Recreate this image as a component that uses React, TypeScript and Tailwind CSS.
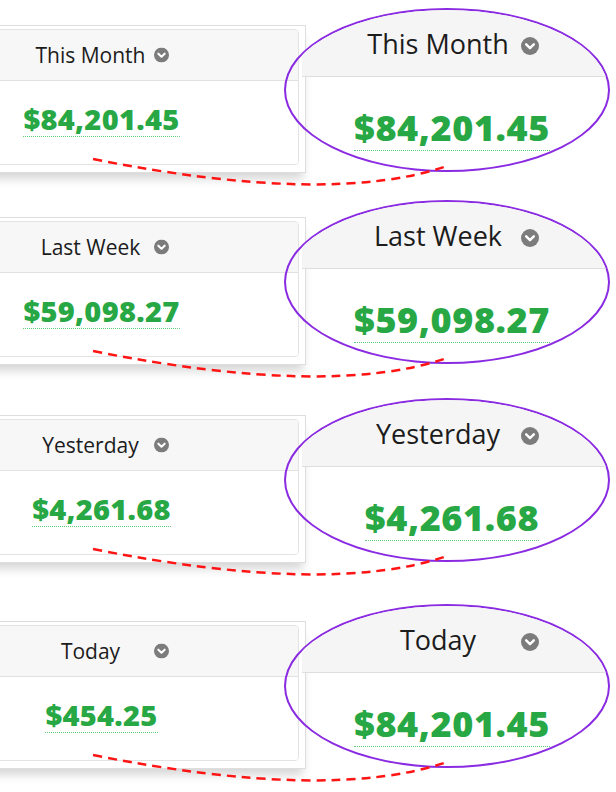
import React from "react";

type Row = { label: string; amount: string; zoomLabel: string; zoomAmount: string; h: string };

const rows: Row[] = [
  { label: "This Month", amount: "$84,201.45", zoomLabel: "This Month", zoomAmount: "$84,201.45", h: "h-[192px]" },
  { label: "Last Week", amount: "$59,098.27", zoomLabel: "Last Week", zoomAmount: "$59,098.27", h: "h-[198px]" },
  { label: "Yesterday", amount: "$4,261.68", zoomLabel: "Yesterday", zoomAmount: "$4,261.68", h: "h-[206px]" },
  { label: "Today", amount: "$454.25", zoomLabel: "Today", zoomAmount: "$84,201.45", h: "h-[196px]" },
];

function ChevronCircle({ size }: { size: number }) {
  return (
    <svg width={size} height={size} viewBox="0 0 16 16">
      <circle cx="8" cy="8" r="8" fill="#7c7c7c" />
      <path d="M4.6 6.6 L8 9.9 L11.4 6.6" fill="none" stroke="#fff" strokeWidth="2.2" strokeLinecap="round" strokeLinejoin="round" />
    </svg>
  );
}

function Card({ label, amount }: { label: string; amount: string }) {
  return (
    <div className="ml-[-100px] mt-[25px] w-[406px] h-[148px] shrink-0 border border-[#dedede] bg-white pt-[3px] pr-[6px] pb-[7px] pl-[3px] shadow-[0_9px_9px_-3px_rgba(0,0,0,0.16)]">
      <div className="h-full rounded-[4px] border border-[#e3e3e3] overflow-hidden flex flex-col">
        <div className="relative h-[51px] shrink-0 flex items-center justify-center pr-[22px] bg-[#f7f7f7] border-b border-[#e2e2e2]">
          <span className="text-[21px] text-[#1c1c1c] leading-none">{label}</span>
          <span className="absolute left-[249px] top-1/2 -translate-y-1/2 flex">
            <ChevronCircle size={15} />
          </span>
        </div>
        <div className="flex-1 flex justify-center pt-[20px] bg-white">
          <span className="h-fit text-[29px] font-extrabold leading-[35px] tracking-[0.3px] text-[#28a745] border-b border-dotted border-[#5fcf77]">
            {amount}
          </span>
        </div>
      </div>
    </div>
  );
}

function Zoom({ label, amount }: { label: string; amount: string }) {
  return (
    <div className="relative z-10 ml-[-22px] mt-[8px] w-[326px] h-[164px] shrink-0 rounded-[50%] border-2 border-[#8a2be2] overflow-hidden flex flex-col">
      <div className="relative ml-[16px] h-[67px] shrink-0 flex items-center justify-center pt-[1px] pr-[34px] bg-[#f5f5f5] border-b border-[#dedede]">
        <span className="text-[27px] text-[#1c1c1c] leading-none">{label}</span>
        <span className="absolute left-[219px] top-[27px] flex">
          <ChevronCircle size={18} />
        </span>
      </div>
      <div className="ml-[16px] flex-1 flex justify-center pt-[29px] pr-[6px]">
        <span className="h-fit text-[36px] font-extrabold leading-[44px] tracking-[0.6px] text-[#28a745] border-b border-dotted border-[#5fcf77]">
          {amount}
        </span>
      </div>
    </div>
  );
}

export default function App() {
  return (
    <div className="w-[616px] h-[792px] overflow-hidden bg-white font-['Open_Sans',sans-serif] flex flex-col">
      {rows.map((r) => (
        <div key={r.label} className={`relative flex items-start shrink-0 ${r.h}`}>
          <Card label={r.label} amount={r.amount} />
          <Zoom label={r.zoomLabel} amount={r.zoomAmount} />
          {/* annotation line from card to zoom */}
          <svg className="absolute inset-0 z-20 pointer-events-none" width="616" height="200">
            <path d="M93 159 Q330 206 447 166" fill="none" stroke="#ff1414" strokeWidth="2.5" strokeDasharray="9 6" />
          </svg>
        </div>
      ))}
    </div>
  );
}
